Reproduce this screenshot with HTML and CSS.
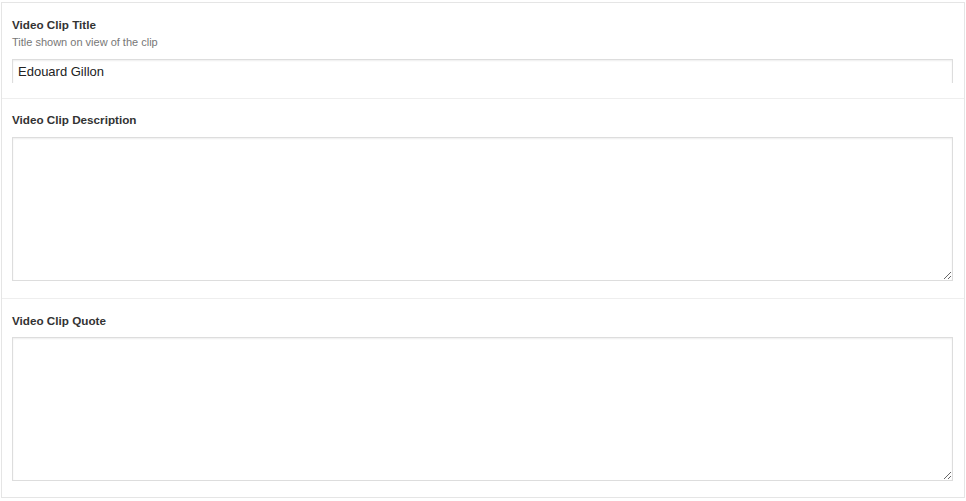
FILE: index.html
```html
<!DOCTYPE html>
<html>
<head>
<meta charset="utf-8">
<link rel="stylesheet" href="styles.css">
</head>
<body>
<div class="box">
  <div class="field first">
    <div class="label">Video Clip Title</div>
    <div class="desc">Title shown on view of the clip</div>
    <div class="input-clip"><input class="input" type="text" value="Edouard Gillon"></div>
  </div>
  <div class="field">
    <div class="label">Video Clip Description</div>
    <textarea class="area"></textarea>
  </div>
  <div class="field last">
    <div class="label">Video Clip Quote</div>
    <textarea class="area"></textarea>
  </div>
</div>
</body>
</html>
```

FILE: styles.css
```css
html, body { margin: 0; padding: 0; background: #fff; }
body { font-family: "Liberation Sans", Arial, sans-serif; }
.box {
  margin: 2px 0 0 1px;
  width: 962px;
  border: 1px solid #e5e5e5;
  background: #fff;
}
.field {
  padding: 13px 11px 17px 10px;
  border-bottom: 1px solid #eeeeee;
}
.field.first {
  height: 96px;
  box-sizing: border-box;
  padding-top: 14px;
  padding-bottom: 0;
}
.field.last { border-bottom: none; padding-top: 14px; padding-bottom: 16px; }
.label {
  font-size: 11.7px;
  font-weight: bold;
  color: #333;
  line-height: 16px;
}
.desc {
  font-size: 11px;
  color: #777;
  line-height: 14px;
  margin-top: 2px;
}
.input-clip {
  margin-top: 10px;
  height: 24px;
  overflow: hidden;
}
.input {
  display: block;
  width: 941px;
  height: 30px;
  box-sizing: border-box;
  margin: 0;
  border: 1px solid #dddddd;
  box-shadow: inset 0 1px 2px rgba(0,0,0,0.07);
  padding: 0 5px 6px 5px;
  font-family: "Liberation Sans", Arial, sans-serif;
  font-size: 13px;
  color: #222;
  line-height: 22px;
  outline: none;
  background: #fff;
}
.area {
  display: block;
  margin: 9px 0 0 0;
  width: 941px;
  height: 144px;
  box-sizing: border-box;
  border: 1px solid #dddddd;
  box-shadow: inset 0 1px 2px rgba(0,0,0,0.07);
  resize: vertical;
  outline: none;
  font-family: "Liberation Sans", Arial, sans-serif;
  font-size: 12px;
  background: #fff;
}
.last .area { margin-top: 8px; }
```
